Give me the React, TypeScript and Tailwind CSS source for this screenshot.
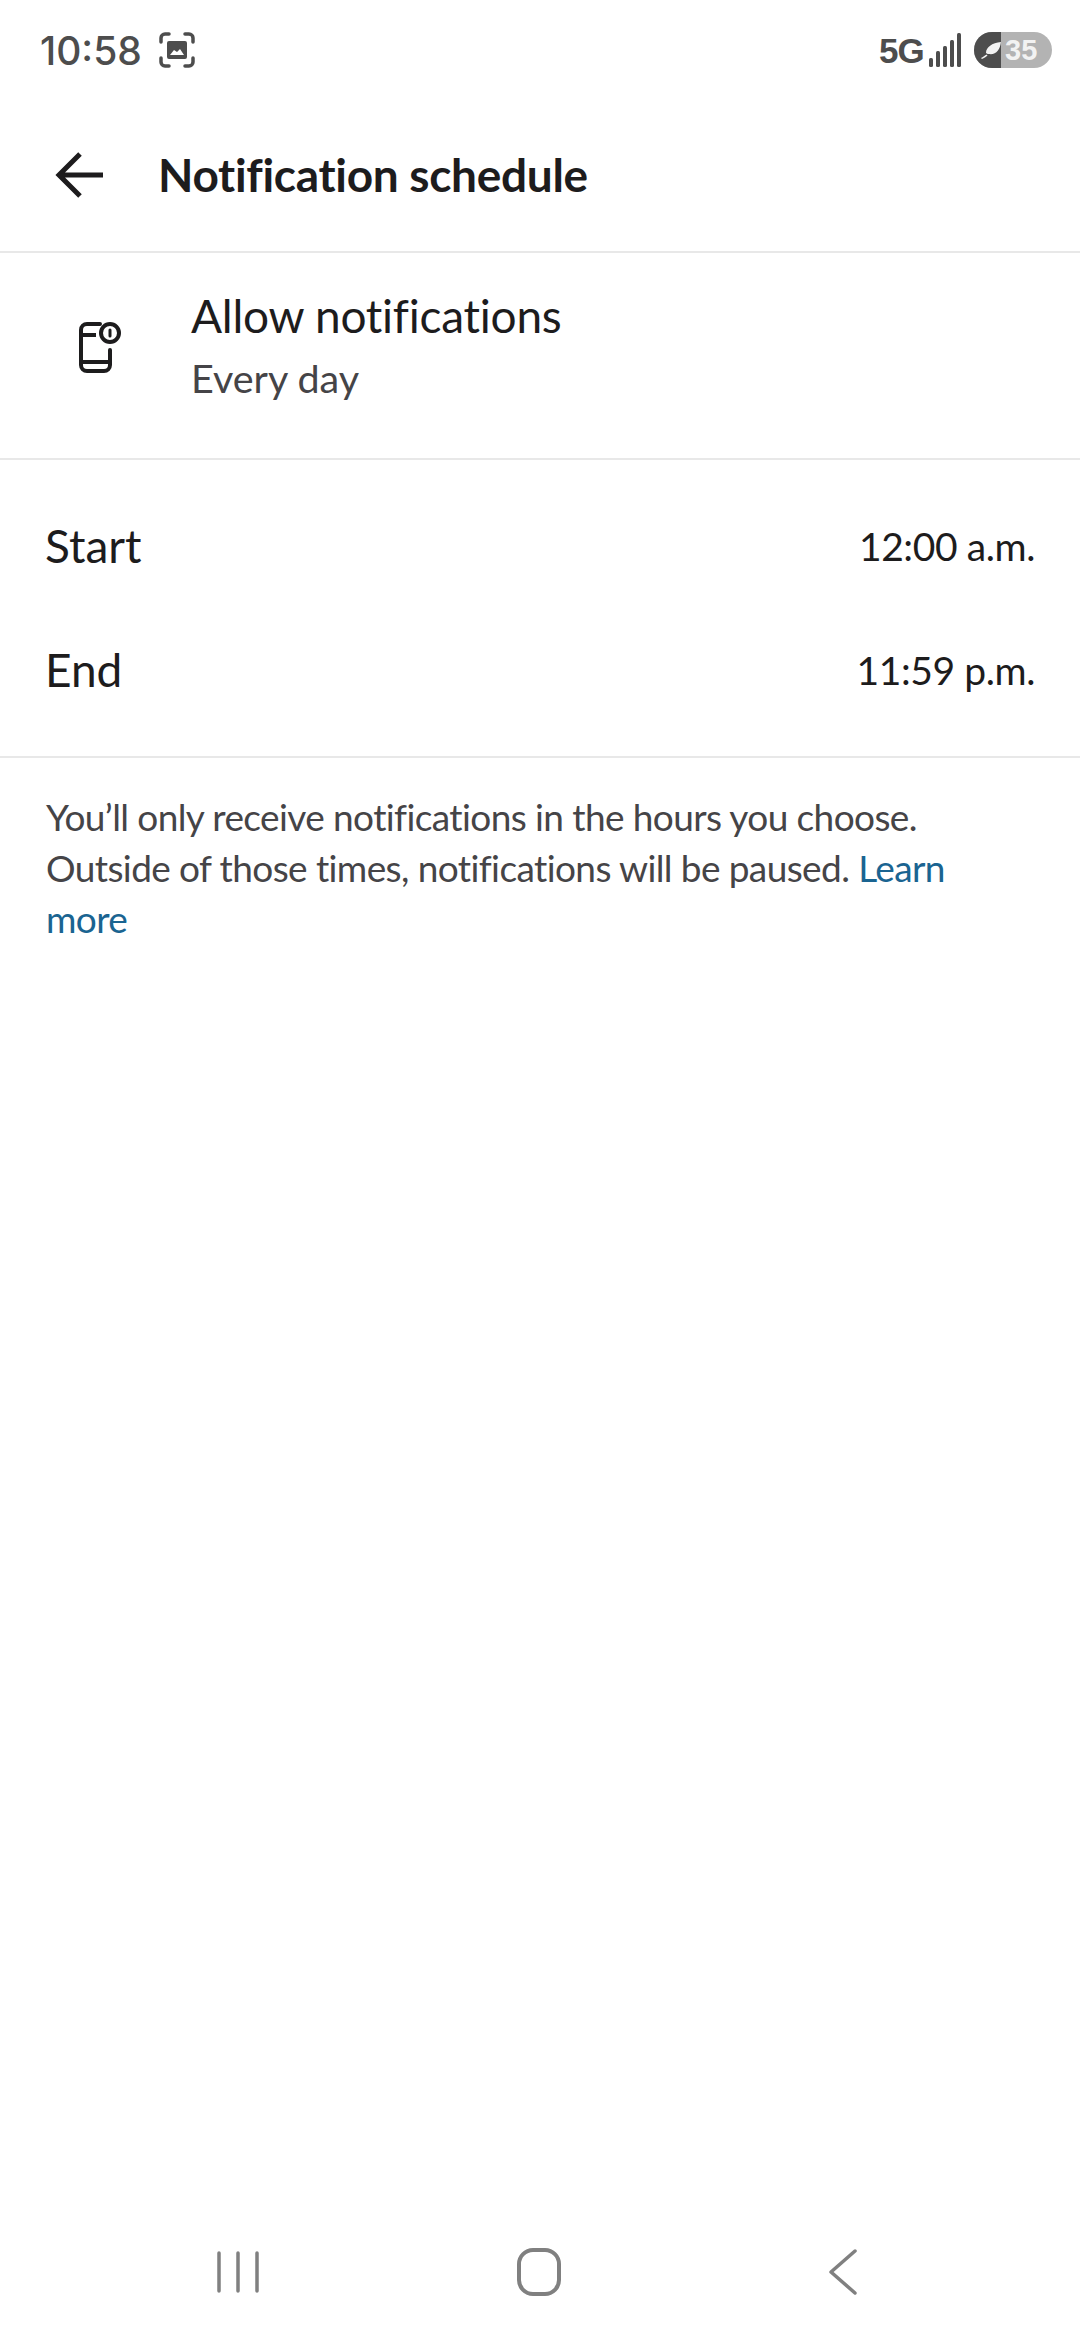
const lato = "font-['Lato',sans-serif]";

function ScreenshotIcon() {
  return (
    <svg width="36" height="36" viewBox="0 0 36 36" fill="none" className="text-[#4d4d4d]">
      <path
        d="M2 10V6a4 4 0 0 1 4-4h4M26 2h4a4 4 0 0 1 4 4v4M34 26v4a4 4 0 0 1-4 4h-4M10 34H6a4 4 0 0 1-4-4v-4"
        stroke="currentColor"
        strokeWidth="3.500"
        strokeLinecap="round"
      />
      <path
        fillRule="evenodd"
        d="M10 9h16a2 2 0 0 1 2 2v14a2 2 0 0 1-2 2H10a2 2 0 0 1-2-2V11a2 2 0 0 1 2-2Zm1 14 4-5 3 2 3-3 4 6H11Z"
        fill="currentColor"
      />
    </svg>
  );
}

function SignalBars() {
  return (
    <svg width="33" height="34" viewBox="0 0 33 34" fill="#4d4d4d">
      <rect x="1" y="25" width="4" height="9" rx="1.5" />
      <rect x="8" y="18" width="4" height="16" rx="1.5" />
      <rect x="15" y="13" width="4" height="21" rx="1.5" />
      <rect x="22" y="7" width="4" height="27" rx="1.5" />
      <rect x="29" y="0" width="4" height="34" rx="1.5" />
    </svg>
  );
}

function BatteryPill() {
  return (
    <div className="flex h-9 w-[78px] overflow-hidden rounded-full bg-[#b3b3b3]">
      <div className="flex w-[27px] items-center justify-end bg-[#4d4d4d]">
        <svg width="20" height="18" viewBox="0 0 20 18" fill="#f2f2f2">
          <path d="M20 1C19 9 15 14 8 13 6.500 13 5.500 12.500 5 12 5 6 11 2 20 1ZM0 17c2-1 4-2.500 5.500-3.500l1 1C5 16 3 17 1 18Z" />
        </svg>
      </div>
      <span className="flex-1 pl-[4px] font-['Liberation_Sans',sans-serif] text-[29px] leading-9 font-bold text-[#f2f2f2]">
        35
      </span>
    </div>
  );
}

function StatusBar() {
  return (
    <div className="flex h-[100px] items-center justify-between pr-[28px] pl-10 font-['Inter',sans-serif] text-[#4d4d4d]">
      <div className="flex items-center gap-[17px]">
        <span className="text-[39px] leading-none font-medium">10:58</span>
        <ScreenshotIcon />
      </div>
      <div className="flex items-center">
        <span className="mr-[4px] font-['Liberation_Sans',sans-serif] text-[35px] leading-none font-bold tracking-[-0.8px]">5G</span>
        <SignalBars />
        <div className="ml-[13px]">
          <BatteryPill />
        </div>
      </div>
    </div>
  );
}

function BackArrow() {
  return (
    <svg width="48" height="46" viewBox="0 0 48 46" fill="none" stroke="#1d1c1d" strokeWidth="5">
      <path d="M48 23H4M25 2 4 23l21 21" />
    </svg>
  );
}

function PhoneAlertIcon() {
  return (
    <svg width="42" height="51" viewBox="0 0 42 51" fill="none" stroke="#1d1c1d" strokeWidth="4">
      <path d="M21 2H8a6 6 0 0 0-6 6v35a6 6 0 0 0 6 6h17a6 6 0 0 0 6-6V28" strokeLinecap="round" />
      <path d="M2 13h15M2 40h29" />
      <circle cx="31" cy="11" r="9" />
      <path d="M31 8v6" strokeLinecap="round" strokeWidth="3" />
    </svg>
  );
}

function TimeRow({ label, value }: { label: string; value: string }) {
  return (
    <div className="flex h-[124px] items-center justify-between px-[45px] text-[#1d1c1d]">
      <span className="text-[46px] leading-none">{label}</span>
      <span className="text-[39px] leading-none tracking-[-0.4px]">{value}</span>
    </div>
  );
}

export default function App() {
  return (
    <div className={`flex min-h-[2340px] flex-col bg-white ${lato}`}>
      <StatusBar />

      {/* Top app bar */}
      <div className="flex h-[153px] items-center border-b-2 border-[#e8e8e8] pb-[2px] pl-[55px]">
        <BackArrow />
        <h1 className="ml-[55px] text-[46px] leading-none font-bold tracking-[-0.3px] text-[#1d1c1d]">Notification schedule</h1>
      </div>

      {/* Schedule summary */}
      <div className="flex h-[207px] items-center border-b-2 border-[#e8e8e8] pb-[17px]">
        <div className="flex w-[191px] justify-center pl-[9px]">
          <PhoneAlertIcon />
        </div>
        <div className="flex flex-col">
          <span className="text-[46px] leading-[62px] tracking-[-0.25px] text-[#1d1c1d]">Allow notifications</span>
          <span className="text-[39.5px] leading-[62px] text-[#454447]">Every day</span>
        </div>
      </div>

      <div className="border-b-2 border-[#e8e8e8] py-6">
        <TimeRow label="Start" value="12:00 a.m." />
        <TimeRow label="End" value="11:59 p.m." />
      </div>

      <p className="pt-[33px] pr-[60px] pl-[46px] text-[37px] leading-[51px] tracking-[-0.6px] text-[#454447]">
        You’ll only receive notifications in the hours you choose. Outside of those times, notifications will be paused.{' '}
        <span className="text-[#1a6491]">Learn more</span>
      </p>

      {/* System navigation */}
      <div className="mt-auto flex h-[136px] items-center pl-[217px]">
        <svg width="42" height="42" viewBox="0 0 42 42" stroke="#808080" strokeWidth="3.500" strokeLinecap="round">
          <path d="M2 2v38M21 2v38M40 2v38" />
        </svg>
        <svg width="44" height="48" viewBox="0 0 44 48" fill="none" stroke="#808080" strokeWidth="4" className="ml-[258px]">
          <rect x="2" y="2" width="40" height="44" rx="14" />
        </svg>
        <svg width="30" height="46" viewBox="0 0 30 46" fill="none" stroke="#808080" strokeWidth="3.500" strokeLinecap="round" strokeLinejoin="round" className="ml-[267px]">
          <path d="M27 2 3 23l24 21" />
        </svg>
      </div>
    </div>
  );
}
